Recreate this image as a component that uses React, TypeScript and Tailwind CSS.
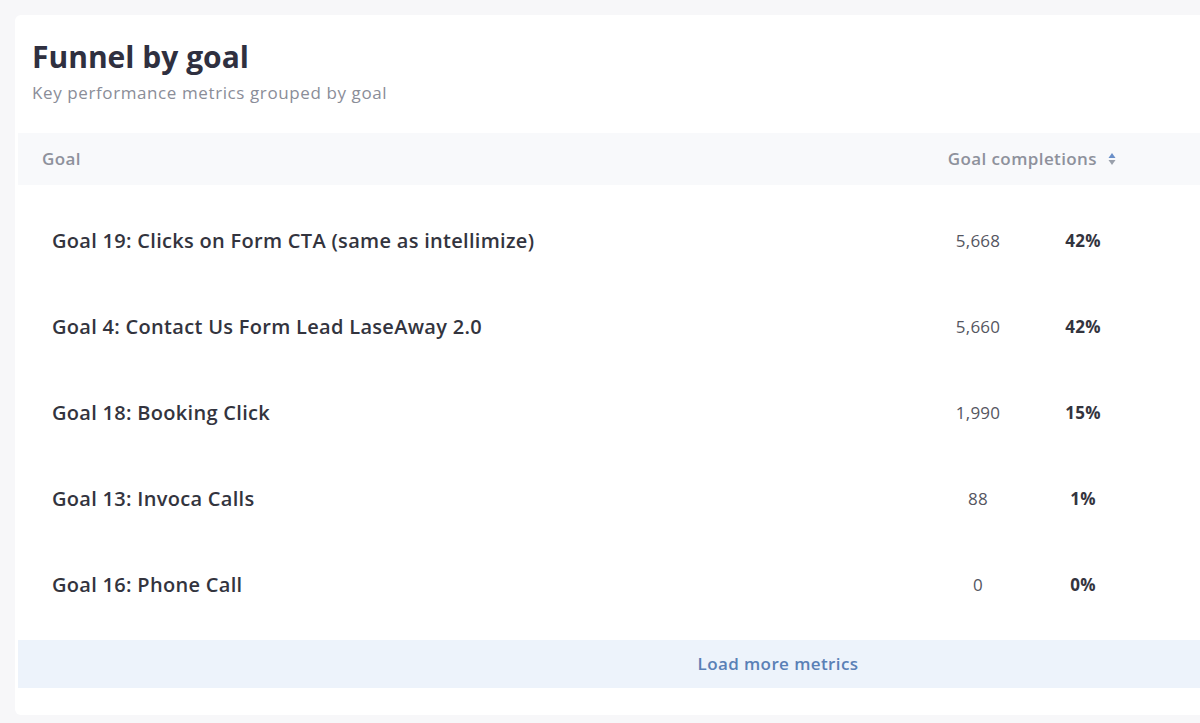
const rows = [
  { goal: 'Goal 19: Clicks on Form CTA (same as intellimize)', count: '5,668', pct: '42%' },
  { goal: 'Goal 4: Contact Us Form Lead LaseAway 2.0', count: '5,660', pct: '42%' },
  { goal: 'Goal 18: Booking Click', count: '1,990', pct: '15%' },
  { goal: 'Goal 13: Invoca Calls', count: '88', pct: '1%' },
  { goal: 'Goal 16: Phone Call', count: '0', pct: '0%' },
];

const SortIcon = () => (
  <svg width="8" height="16" viewBox="0 0 8 16" className="ml-[11px]">
    <path d="M4 2 L7.5 7 L0.5 7 Z" fill="#6a8fc8" />
    <path d="M4 14 L7.5 9 L0.5 9 Z" fill="#9aa0ab" />
  </svg>
);

export default function App() {
  return (
    <div
      className="min-h-[723px] w-[1200px] overflow-hidden bg-[#f7f7f9] pl-[15px] pt-[15px]"
      style={{ fontFamily: '"Open Sans", Lato, sans-serif' }}
    >
      <div className="h-[700px] rounded-l-md bg-white pt-[22px]">
        <div className="pl-[17px]">
          <h1 className="text-[30px] font-bold leading-[40px] text-[#2f3040]">Funnel by goal</h1>
          <p className="mt-[6px] text-[17px] leading-[20px] tracking-[0.6px] text-[#8a8d98]">
            Key performance metrics grouped by goal
          </p>
        </div>

        <div className="ml-[3px] mt-[30px] flex h-[52px] items-center bg-[#f8f9fb] pl-[24px] text-[17px] font-semibold tracking-[0.4px] text-[#8e919c]">
          <div className="flex-1">Goal</div>
          <div className="mr-[84px] flex items-center">
            Goal completions
            <SortIcon />
          </div>
        </div>

        <div className="ml-[3px]">
          {rows.map((r) => (
            <div key={r.goal} className="flex h-[86px] items-center pl-[34px] pt-[26px]">
              <div className="flex-1 text-[20px] font-semibold tracking-[0.3px] text-[#33343e]">{r.goal}</div>
              <div className="w-[116px] text-center text-[17px] tracking-[0.2px] text-[#55565f]">{r.count}</div>
              <div className="ml-[17px] mr-[87px] w-[60px] text-center text-[17px] font-bold tracking-[0.3px] text-[#33343e]">
                {r.pct}
              </div>
            </div>
          ))}
        </div>

        <div className="ml-[3px] mt-[25px] flex h-[48px] items-center justify-center bg-[#edf3fb] pl-[338px] text-[17px] font-semibold tracking-[0.4px] text-[#5a80b6]">
          Load more metrics
        </div>
      </div>
    </div>
  );
}
